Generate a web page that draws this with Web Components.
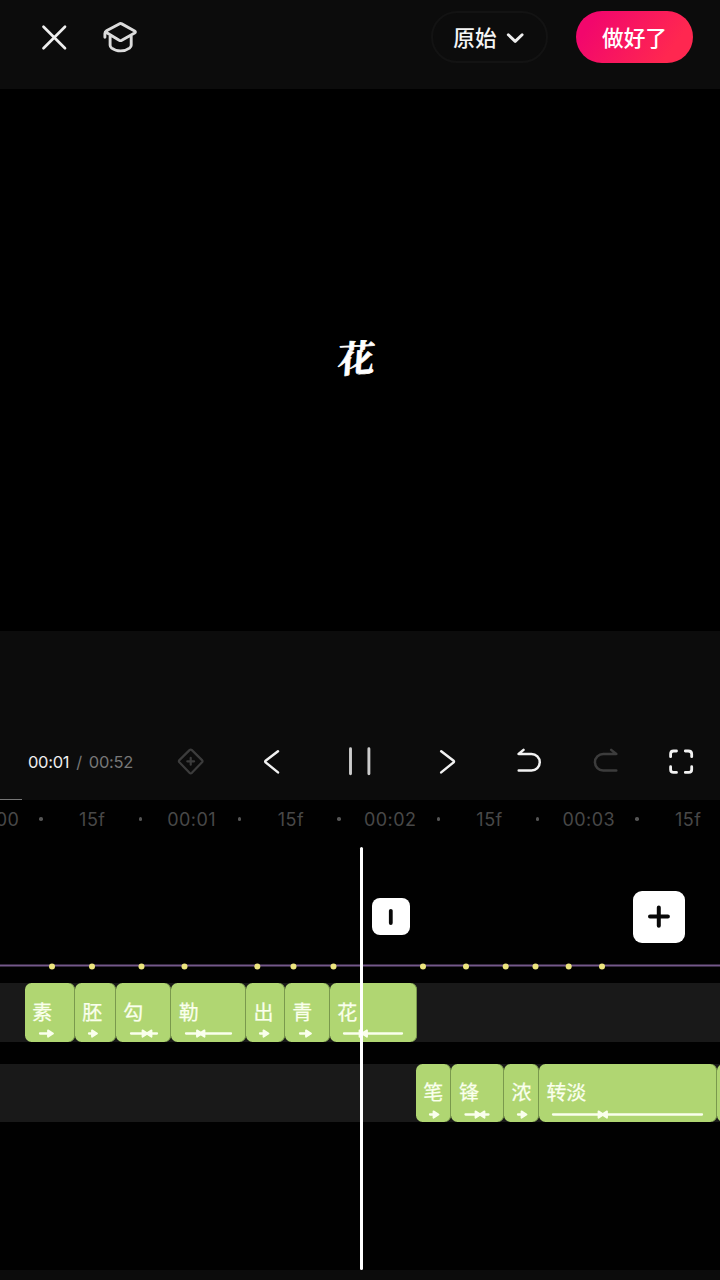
<!DOCTYPE html>
<html lang="zh-CN">
<head>
<meta charset="utf-8">
<title>视频编辑</title>
<style>
html,body{margin:0;padding:0;background:#010101;width:720px;height:1280px;overflow:hidden}
body{font-family:Inter,"Noto Sans CJK SC",sans-serif;color:#fff}
</style>
</head>
<body>
<video-editor></video-editor>
<script>
const define=(name,html)=>{
  customElements.define(name,class extends HTMLElement{
    constructor(){super();this.attachShadow({mode:'open'});}
    connectedCallback(){
      const t=document.createElement('template');
      t.innerHTML=typeof html==='function'?html(this):html;
      this.shadowRoot.replaceChildren(t.content.cloneNode(true));
    }
  });
};

define('top-bar',`<style>
:host{display:flex;height:89px;box-sizing:border-box;padding:11px 27px 0 39px;background:#0c0c0c;align-items:flex-start}
svg{display:block}
.close{margin:11px 0 0}
.cap{margin:9px 0 0 32px}
.pill{margin-left:auto;margin-right:28px}
</style>
<svg class="close" width="30" height="30" viewBox="0 0 30 30" fill="none" stroke="#eee" stroke-width="2.7" stroke-linecap="round"><path d="M4.5 4.8 26 26.2M26 4.8 4.5 26.2"/></svg>
<svg class="cap" width="38" height="36" viewBox="0 0 38 36" fill="none" stroke="#dcdcdc" stroke-width="2.9" stroke-linecap="round" stroke-linejoin="round"><path d="M3.900 17.200V13.500Q3.900 11.700 5.500 10.800L18.200 3.900Q19.500 3.200 20.800 3.900L33.600 11Q35.200 12 33.600 13L20.800 20.300Q19.500 21 18.200 20.300L5 12.300M9.100 16V25.200Q9.100 26.800 10.700 28.100Q14.500 30.900 19.600 30.900Q24.600 30.900 28.500 28.100Q30.200 26.800 30.200 25.200V16"/></svg>
<pill-button class="pill" kind="outline">原始<svg slot="icon" width="20" height="14" viewBox="0 0 20 14" fill="none" stroke="#eee" stroke-width="2.900" stroke-linecap="round" stroke-linejoin="round"><path d="M2.300 3.700 9.200 10.400 16.100 3.700"/></svg></pill-button>
<pill-button kind="primary">做好了</pill-button>`);

define('pill-button',`<style>
:host{display:flex;box-sizing:border-box;height:52px;width:117px;border-radius:26px;align-items:center;justify-content:center;font-size:21.700px;line-height:30px;padding-top:1px;font-weight:500;color:#f5f5f5;gap:9px}
:host([kind=outline]){border:2px solid #131313}
:host([kind=primary]){background:linear-gradient(125deg,#f2076c 15%,#ff2750 80%);color:#fff}
</style><slot></slot><slot name="icon"></slot>`);

define('preview-stage',`<style>
:host{display:flex;height:542px;background:#000;align-items:center;justify-content:center;box-sizing:border-box;padding-right:8px}
span{font-size:37px;line-height:44px;font-weight:700;font-family:"Noto Serif CJK SC","Noto Sans CJK SC",serif;-webkit-text-stroke:.7px #fff;transform:translateY(-4px) skew(-4deg,-3deg)}
</style><span><slot></slot></span>`);

define('time-readout',`<style>
:host{display:flex;gap:7px;font-size:16.500px;line-height:20px;letter-spacing:-.3px;color:#777;white-space:nowrap}
b,i{font-weight:400;font-style:normal}
b{color:#eee}
</style><b><slot name="now"></slot></b><i>/</i><span><slot></slot></span>`);

define('playback-bar',`<style>
:host{display:block;height:169px;background:#0c0c0c;box-sizing:border-box;padding-top:108px}
.row{display:grid;grid-template-columns:171px 40px 41px 40px 48px 40px 48px 40px 41px 40px 38px 40px 34px 40px;height:46px;align-items:center}
time-readout{padding-left:28px}
svg{display:block;fill:none;stroke:#f2f2f2;stroke-width:2.500;stroke-linecap:round;stroke-linejoin:round}
.dim{stroke:#3c3c3c}
.line{width:22px;height:1px;background:#777;margin-top:14px}
</style>
<div class="row">
<time-readout><span slot="now">00:01</span>00:52</time-readout>
<svg class="dim" width="40" height="40" viewBox="0 0 40 40" style="stroke-width:2.200"><path d="M18.500 8.100Q19.700 7 20.900 8.100L31 18.100Q32 19.200 31 20.300L20.900 30.800Q19.700 31.800 18.500 30.800L8.400 20.300Q7.400 19.200 8.400 18.100ZM19.700 15.900V22.700M16.300 19.300H23.100"/></svg><i></i>
<svg width="40" height="40" viewBox="0 0 40 40"><path d="M26 9.200 13.600 18.800Q12.900 19.600 13.600 20.400L26 30.400"/></svg><i></i>
<svg width="40" height="40" viewBox="0 0 40 40" style="stroke:#ccc;stroke-width:2.900"><path d="M10.500 6.700V31.700M28.900 6.700V31.700"/></svg><i></i>
<svg width="40" height="40" viewBox="0 0 40 40"><path d="M13.200 9.200 25.600 18.800Q26.300 19.600 25.600 20.400L13.200 30.400"/></svg><i></i>
<svg width="40" height="40" viewBox="0 0 40 40"><path d="M14.500 7.900 9.600 12H22.500A8.200 8.200 0 0 1 22.500 28.500H9.700"/></svg><i></i>
<svg class="dim" width="40" height="40" viewBox="0 0 40 40"><path d="M24.200 7.900 29.300 12H16.200A8.200 8.200 0 0 0 16.200 28.500H29.300"/></svg><i></i>
<svg width="40" height="40" viewBox="0 0 40 40" style="stroke-width:2.800"><path d="M9.600 14.700V12Q9.600 9 12.600 9H15.500M24.300 9H27.200Q30.700 9 30.700 12V14.700M30.700 24.700V27.400Q30.700 30.400 27.700 30.400H24.300M15.500 30.400H12.600Q9.600 30.400 9.600 27.400V24.700"/></svg>
</div><div class="line"></div>`);

define('time-ruler',`<style>
:host{display:flex;height:39px;overflow:hidden}
div{display:flex;margin-left:-31.900px;align-items:center}
span,i{flex:none;width:49.670px;display:flex;justify-content:center;font-size:18px;line-height:22px;letter-spacing:.45px;color:#484848;white-space:nowrap}
i::before{content:"";width:3.500px;height:3.500px;border-radius:50%;background:#555;margin:-1px 3px 0 0}
</style><div>${['00:00','15f','00:01','15f','00:02','15f','00:03','15f'].map(t=>`<span>${t}</span><i></i>`).join('')}</div>`);

define('square-button',`<style>
:host{display:flex;align-items:center;justify-content:center;background:#fff}
:host([size=small]){width:37.500px;height:37.500px;border-radius:8px}
:host([size=large]){width:52px;height:52px;border-radius:9px}
</style><slot></slot>`);

define('keyframe-line',()=>{
  const xs=[52,92,141.5,184.5,257.3,293.5,333.5,423,466,505.7,535.5,568.7,602];
  return `<style>:host{display:block;height:10px}svg{display:block}</style>
<svg width="720" height="10" viewBox="0 0 720 10"><path d="M0 4.500H720" stroke="#74588a" stroke-width="2"/>${xs.map(x=>`<circle cx="${x}" cy="5.500" r="3" fill="#ece57e"/>`).join('')}</svg>`;
});

/* marks="line start, line end, right arrow tip, left arrow tip" relative to the clip */
define('text-clip',el=>{
  const w=+el.getAttribute('w');
  const [a,b,r,l]=(el.getAttribute('marks')||'').split(',').map(Number);
  let s='';
  if(b) s+=`<path d="M${a} 4.500H${b}" stroke="#faffed" stroke-width="2.300" stroke-linecap="round"/>`;
  const head=(tip,dx)=>`<path d="M${tip+dx} 1.300 ${tip} 4.500 ${tip+dx} 7.700Z" fill="#faffed" stroke="#faffed" stroke-width="1.800" stroke-linejoin="round"/>`;
  if(r) s+=head(r-.5,-5);
  if(l) s+=head(l+.5,5);
  return `<style>:host{display:flex;flex-direction:column;flex:none;width:${w}px;height:58.500px;border-radius:6.500px;background:#b0d672;overflow:hidden;box-sizing:border-box;padding-top:15.500px;box-shadow:inset -.8px 0 #6d8a44}
span{height:30.500px;line-height:29px;padding-left:7.500px;font-size:20px;color:#faffed;white-space:nowrap;-webkit-text-stroke:.25px #faffed}svg{display:block}</style>
<span><slot></slot></span><svg width="${w}" height="10">${s}</svg>`;
});

define('clip-track',`<style>:host{display:flex;height:58.500px;background:#191919;box-sizing:border-box;overflow:hidden}</style><slot></slot>`);

define('time-line',`<style>
:host{display:block;position:relative;height:470px;background:#010101;overflow:hidden}
.tools{display:flex;height:52px;padding:0 35.500px 0 372px;margin-top:51.500px;justify-content:space-between;align-items:center}
keyframe-line{margin-top:18.500px}
.one{margin-top:12.200px;padding-left:24.800px}
.two{margin-top:22px;padding-left:415.700px}
.head{position:absolute;left:360px;top:47px;width:3px;height:423px;border-radius:2px;background:#fff}
svg{display:block}
</style>
<time-ruler></time-ruler>
<div class="tools">
<square-button size="small"><svg width="20" height="24" fill="none" stroke="#080808" stroke-width="3.800" stroke-linecap="round"><path d="M9.800 5.800V18"/></svg></square-button>
<square-button size="large"><svg width="28" height="28" fill="none" stroke="#080808" stroke-width="4" stroke-linecap="round"><path d="M13.800 4.500V22.700M5 13.600H22.900"/></svg></square-button>
</div>
<keyframe-line></keyframe-line>
<clip-track class="one">
<text-clip w="50" marks="15,22,28.500">素</text-clip>
<text-clip w="41" marks="14,17,22.500">胚</text-clip>
<text-clip w="55.4" marks="15,41,32,30">勾</text-clip>
<text-clip w="74.8" marks="15,60,31.500,28">勒</text-clip>
<text-clip w="38.8" marks="14,17,23">出</text-clip>
<text-clip w="45" marks="15,20,26.500">青</text-clip>
<text-clip w="87.2" marks="14,72,35,31.500">花</text-clip>
</clip-track>
<clip-track class="two">
<text-clip w="35.8" marks="14,17,23">笔</text-clip>
<text-clip w="52.4" marks="14.500,37.500,30,28">锋</text-clip>
<text-clip w="35" marks="14,17,23">浓</text-clip>
<text-clip w="178" marks="14,163,65,62.500">转淡</text-clip>
<text-clip w="20"></text-clip>
</clip-track>
<div class="head"></div>`);

define('video-editor',`<style>
:host{display:flex;flex-direction:column;width:720px;height:1280px;overflow:hidden}
footer{flex:1;background:#0c0c0c}
</style>
<top-bar></top-bar>
<preview-stage>花</preview-stage>
<playback-bar></playback-bar>
<time-line></time-line>
<footer></footer>`);
</script>
</body>
</html>
